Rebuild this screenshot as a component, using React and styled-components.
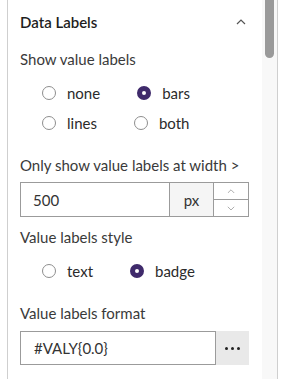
import styled, { createGlobalStyle } from 'styled-components'

const GlobalStyle = createGlobalStyle`
  body {
    margin: 0;
    background: #ffffff;
    font-family: Lato, "Noto Sans", sans-serif;
    color: #323232;
  }
`

const Panel = styled.div`
  display: flex;
  margin-left: 7px;
  width: 269px;
  height: 379px;
  overflow: hidden;
  border-left: 1px solid #cfcfcf;
  border-right: 1px solid #cfcfcf;
`

const Content = styled.div`
  flex: 1;
  padding: 0 13px 0 12px;
`

const ScrollTrack = styled.div`
  width: 15px;
  background: #f8f8f8;
  display: flex;
  justify-content: center;
`

const Thumb = styled.div`
  width: 9px;
  height: 58px;
  background: #9a9a9a;
  border-radius: 0 0 5px 5px;
`

const Header = styled.div`
  height: 44px;
  display: flex;
  align-items: center;
  justify-content: space-between;
  padding-right: 3px;
`

const Title = styled.span`
  font-size: 15px;
  font-weight: 600;
  color: #1e1e1e;
`

const Field = styled.div`
  margin-top: ${p => p.$top || 0}px;
`

const Label = styled.div`
  font-size: 15px;
  line-height: 20px;
  color: #3a3a3a;
  margin-bottom: ${p => p.$gap || 8}px;
`

const RadioGroup = styled.div`
  padding-left: 22px;
`

const RadioRow = styled.div`
  display: flex;
  align-items: center;
  height: 30px;
`

const RadioItem = styled.label`
  display: flex;
  align-items: center;
  margin-right: ${p => p.$space || 37}px;
  font-size: 15px;
  color: #2b2b2b;
`

const Circle = styled.span`
  box-sizing: border-box;
  width: 14px;
  height: 14px;
  border-radius: 50%;
  margin-right: 11px;
  border: ${p => (p.$on ? '5px solid #3f2a6b' : '1px solid #8e8e8e')};
  background: #ffffff;
`

const InputBox = styled.div`
  display: flex;
  height: ${p => p.$h}px;
  box-sizing: border-box;
`

const TextPart = styled.div`
  flex: 1;
  display: flex;
  align-items: center;
  padding-left: ${p => p.$pad || 12}px;
  border: 1px solid #9b9b9b;
  font-size: 15px;
  color: #333333;
`

const Addon = styled.div`
  width: 43px;
  display: flex;
  align-items: center;
  justify-content: center;
  background: #f5f5f5;
  border-top: 1px solid #9b9b9b;
  border-bottom: 1px solid #9b9b9b;
  font-size: 15px;
  color: #333333;
`

const Spinner = styled.div`
  width: 34px;
  display: flex;
  flex-direction: column;
  border: 1px solid #9b9b9b;
`

const SpinBtn = styled.div`
  flex: 1;
  display: flex;
  align-items: center;
  justify-content: center;
  & + & {
    border-top: 1px solid #9b9b9b;
  }
`

const MoreBtn = styled.div`
  width: 33px;
  display: flex;
  align-items: center;
  justify-content: center;
  gap: 3px;
  background: #e9e9e9;
`

const Dot = styled.span`
  width: 3px;
  height: 3px;
  border-radius: 50%;
  background: #222222;
`

const Chevron = ({ up, size = 10, color = '#555', w = 1.2 }) => (
  <svg width={size} height={size * 0.6} viewBox="0 0 10 6">
    <path
      d={up ? 'M1 5 L5 1 L9 5' : 'M1 1 L5 5 L9 1'}
      fill="none"
      stroke={color}
      strokeWidth={w}
    />
  </svg>
)

const Radio = ({ on, children, space }) => (
  <RadioItem $space={space}>
    <Circle $on={on} />
    {children}
  </RadioItem>
)

export default function App() {
  return (
    <>
      <GlobalStyle />
      <Panel>
        <Content>
          <Header>
            <Title>Data Labels</Title>
            <Chevron up />
          </Header>

          <Field $top={5}>
            <Label $gap={9}>Show value labels</Label>
            <RadioGroup>
              <RadioRow>
                <Radio>none</Radio>
                <Radio on>bars</Radio>
              </RadioRow>
              <RadioRow>
                <Radio>lines</Radio>
                <Radio on={false}>both</Radio>
              </RadioRow>
            </RadioGroup>
          </Field>

          <Field $top={17}>
            <Label $gap={7}>Only show value labels at width &gt;</Label>
            <InputBox $h={35}>
              <TextPart>500</TextPart>
              <Addon>px</Addon>
              <Spinner>
                <SpinBtn><Chevron up size={8} color="#999" w={1} /></SpinBtn>
                <SpinBtn><Chevron size={8} color="#999" w={1} /></SpinBtn>
              </Spinner>
            </InputBox>
          </Field>

          <Field $top={10}>
            <Label $gap={9}>Value labels style</Label>
            <RadioGroup>
              <RadioRow>
                <Radio>text</Radio>
                <Radio on>badge</Radio>
              </RadioRow>
            </RadioGroup>
          </Field>

          <Field $top={17}>
            <Label $gap={8}>Value labels format</Label>
            <InputBox $h={34}>
              <TextPart $pad={13}>#VALY{'{'}0.0{'}'}</TextPart>
              <MoreBtn>
                <Dot />
                <Dot />
                <Dot />
              </MoreBtn>
            </InputBox>
          </Field>
        </Content>
        <ScrollTrack>
          <Thumb />
        </ScrollTrack>
      </Panel>
    </>
  )
}
